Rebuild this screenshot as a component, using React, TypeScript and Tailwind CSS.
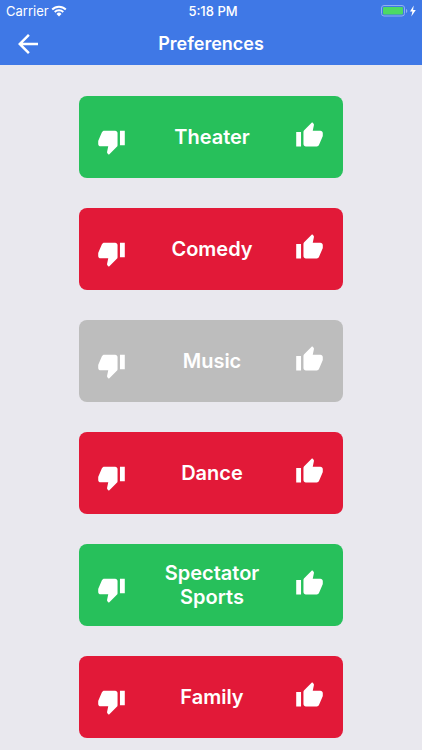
import React from "react";
import { MdArrowBack } from "react-icons/md";

type Preference = { name: string; color: string };

const preferences: Preference[] = [
  { name: "Theater", color: "bg-[#27c05b]" },
  { name: "Comedy", color: "bg-[#e21938]" },
  { name: "Music", color: "bg-[#bdbdbd]" },
  { name: "Dance", color: "bg-[#e21938]" },
  { name: "Spectator Sports", color: "bg-[#27c05b]" },
  { name: "Family", color: "bg-[#e21938]" },
];

function ThumbDownIcon() {
  return (
    <svg width="29" height="29" viewBox="0 0 24 24" fill="currentColor" aria-hidden="true">
      <path d="M15 3H6c-.83 0-1.540.5-1.840 1.220l-3.020 7.050c-.09.23-.14.47-.14.73v2c0 1.100.9 2 2 2h6.310l-.95 4.570-.03.320c0 .41.17.79.44 1.060L9.830 23l6.590-6.590c.36-.36.58-.86.58-1.410V5c0-1.100-.9-2-2-2zm4 0v12h4V3h-4z" />
    </svg>
  );
}

function ThumbUpIcon() {
  return (
    <svg width="29" height="29" viewBox="0 0 24 24" fill="currentColor" aria-hidden="true">
      <path d="M1 21h4V9H1v12zm22-11c0-1.100-.9-2-2-2h-6.310l.95-4.570.03-.320c0-.41-.17-.79-.44-1.060L14.170 1 7.590 7.590C7.220 7.950 7 8.450 7 9v10c0 1.100.9 2 2 2h9c.83 0 1.540-.5 1.840-1.220l3.020-7.050c.09-.23.14-.47.14-.73v-2z" />
    </svg>
  );
}

function StatusBar() {
  return (
    <div className="grid h-[22px] grid-cols-[1fr_auto_1fr] items-center px-[6px] text-[13px] leading-4">
      <div className="flex items-center gap-[2px]">
        <span>Carrier</span>
        <svg width="16" height="12" viewBox="0 0 16 12" fill="none" stroke="currentColor" strokeWidth="1.900" aria-hidden="true">
          <path d="M1.200 4.500a9.600 9.600 0 0 1 13.600 0M3.700 7a6.200 6.200 0 0 1 8.600 0" />
          <path d="M8 11.500 5.500 8.900a3.500 3.500 0 0 1 5 0z" fill="currentColor" stroke="none" />
        </svg>
      </div>
      <span className="pl-1 text-center font-medium">5:18 PM</span>
      <svg className="justify-self-end" width="36" height="12" viewBox="0 0 36 12" aria-hidden="true">
        <rect x="1.500" y="0.500" width="23" height="10.500" rx="2.500" fill="none" stroke="#8fb0f0" />
        <rect x="3" y="2" width="20" height="7.500" rx="1" fill="#4cd964" />
        <path d="M26 4v4c.8-.3 1.300-1 1.300-2S26.800 4.300 26 4z" fill="#8fb0f0" />
        <path d="M33.700.5 30 6.500h2.400L31.300 11.500 35.800 5h-2.700z" fill="white" />
      </svg>
    </div>
  );
}

function PreferenceCard({ name, color }: Preference) {
  return (
    <li className={`flex h-[82px] items-center justify-between rounded-lg pr-[19px] pl-[18px] ${color}`}>
      <button type="button" aria-label={`Dislike ${name}`} className="pt-2">
        <ThumbDownIcon />
      </button>
      <h2 className="w-[120px] pl-[3px] text-center text-xl leading-6 font-semibold">{name}</h2>
      <button type="button" aria-label={`Like ${name}`} className="pb-1">
        <ThumbUpIcon />
      </button>
    </li>
  );
}

export default function App() {
  return (
    <div className="h-screen overflow-hidden bg-[#e9e8ee] font-[Inter,sans-serif] text-white">
      <header className="bg-[#3f78e6]">
        <StatusBar />
        <div className="grid h-[43px] grid-cols-[1fr_auto_1fr] items-center px-[13px]">
          <button type="button" aria-label="Back" className="justify-self-start">
            <MdArrowBack size={30} />
          </button>
          <h1 className="text-lg font-semibold">Preferences</h1>
        </div>
      </header>
      <main className="px-[79px] pt-[31px]">
        <ul className="flex flex-col gap-[30px]">
          {preferences.map((p) => (
            <PreferenceCard key={p.name} {...p} />
          ))}
        </ul>
      </main>
    </div>
  );
}
